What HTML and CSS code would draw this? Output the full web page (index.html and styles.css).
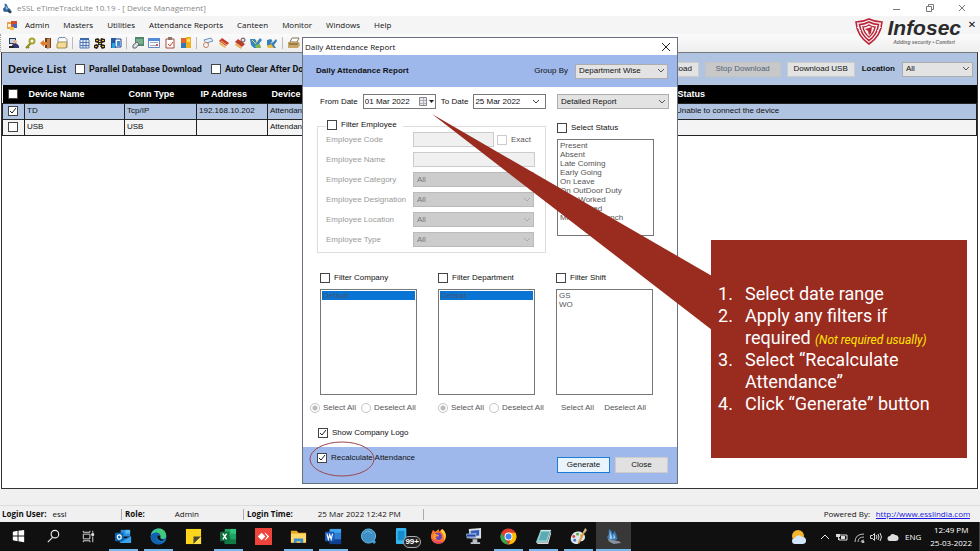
FILE: index.html
```html
<!DOCTYPE html>
<html lang="en">

<head>
  <meta charset="UTF-8">
  <title>eSSL eTimeTrackLite 10.19 - [ Device Management]</title>
  <link rel="stylesheet" href="styles.css">
</head>

<body>

  <!-- Window title -->
  <header class="titlebar">
    <svg class="app-icon" viewBox="0 0 12 12"><path d="M3 1l2 1 2 4 2 1 1 3H2L1 7l2-2z" fill="#2d5f95"/><path d="M4 3l3 4-3 1z" fill="#8db8dc"/><path d="M7 8l4 2-2 2-3-2z" fill="#24435f"/></svg>
    <span class="titlebar-text">eSSL eTimeTrackLite 10.19 - [ Device Management]</span>
    <svg class="window-buttons" viewBox="0 0 74 12" fill="none" stroke="#777"><path d="M1 7.500h7M34.500 4.500h5v5h-5zM36.500 4V2.500h5v5H40M67 3l6 6M73 3l-6 6"/></svg>
  </header>

  <!-- Menu -->
  <nav class="menu">
    <svg class="menu-icon" viewBox="0 0 10 9"><path d="M0 1h6v7H0z" fill="#e9a04d"/><path d="M1 3h4v3H1z" fill="#fff2cf"/><path d="M4 0h6v6H4z" fill="#d24b2c"/><path d="M6 3h4v4H6z" fill="#4268c4"/><path d="M3 6h4v3H3z" fill="#f1c33d"/></svg>
    <a>Admin</a>
    <a>Masters</a>
    <a>Utilities</a>
    <a>Attendance Reports</a>
    <a>Canteen</a>
    <a>Monitor</a>
    <a>Windows</a>
    <a>Help</a>
  </nav>

  <!-- Toolbar -->
  <div class="toolbar">
    <svg viewBox="0 0 12 12"><path d="M1 1h7v6H1z" fill="#333a50"/><path d="M2 2h5v4H2z" fill="#c4d5ef"/><circle cx="7" cy="5" r="2" fill="#e5b88d"/><path d="M4 8q4-4 7 1v2H4z" fill="#33366f"/><path d="M1 9h5v2H1z" fill="#24242c"/></svg>
    <svg viewBox="0 0 12 12"><path d="M7 6L2 11M3 9l2 2" stroke="#8b8a24" stroke-width="2"/><circle cx="8" cy="4" r="2.500" fill="#fff" stroke="#a5a52c" stroke-width="2"/></svg>
    <svg viewBox="0 0 12 12"><path d="M5 1h6v10H5z" fill="#713b1f"/><path d="M7 2l3-1v10l-3 1z" fill="#c48048"/><path d="M0 6l4-3v2h3v3H4v2z" fill="#e17d2c"/></svg>
    <svg viewBox="0 0 12 12"><path d="M3 .500h6l2 2v8H2v-8z" fill="#f8f9fd" stroke="#7c92a8"/><path d="M1 7l2-2h8l-1 6H1z" fill="#f3dc97" stroke="#b08f45"/></svg>
    <span class="separator"></span>
    <svg viewBox="0 0 12 12"><path d="M2 1h9v10H2z" fill="#e3edfb"/><path d="M2 1h9v2H2z" fill="#3868aa"/><path d="M2 3v8h9V3M2 5.500h9M2 8.500h9M5 2v9M8 2v9" stroke="#5278b2" fill="none"/></svg>
    <svg viewBox="0 0 12 12"><path d="M1 2l3-1 2 2-2 3-3-1zM7 1l4 1v3L8 6 6 4zM4 5h4v3H4zM0 8l3-1 2 2-2 3-3-1zM8 7l3 1v3l-3 1-2-3z" fill="#292218"/><path d="M2 3h2v1H2zM8 3h2v1H8zM5 6h2v1H5zM1 9h2v1H1zM8 9h2v1H8z" fill="#e2b02a"/></svg>
    <svg viewBox="0 0 12 12"><path d="M1 1h5v10H1z" fill="#2459aa"/><path d="M5 2h6v8H5z" fill="#fff" stroke="#1b3e8b"/><path d="M7 4h3v5H7z" fill="#3a8bdd"/><path d="M2 6h3v5H2z" fill="#20a5dc"/></svg>
    <span class="separator"></span>
    <svg viewBox="0 0 12 12"><path d="M3 0h9v9H3z" fill="#4f8568"/><path d="M4 2h7v5H4z" fill="#79ad8b"/><path d="M1 8l4-3 2 2-3 4H1z" fill="#d9e2dc" stroke="#667"/></svg>
    <svg viewBox="0 0 12 12"><path d="M.5 1.500h11v9H.5z" fill="#f7faff" stroke="#6b86bb"/><path d="M0 1h12v3H0z" fill="#5689d5"/><path d="M2 5.500h8M2 8.500h6" stroke="#9fabc2"/><path d="M8 7h2v2H8z" fill="#dd5546"/></svg>
    <svg viewBox="0 0 12 12"><path d="M2 2h8v9H2z" fill="#fff" stroke="#a84a3c"/><path d="M4 0h4v3H4z" fill="#86786c"/><path d="M4 7l2 2 3-4" fill="none" stroke="#d6492c"/></svg>
    <svg viewBox="0 0 12 12"><path d="M1 1h5v5H1z" fill="#e0662a"/><path d="M6 0h5v11H6z" fill="#f2b01f"/><path d="M1 6h5v5H1z" fill="#2f7bb5"/><path d="M7 2h3v3H7z" fill="#ffe06b"/></svg>
    <span class="separator"></span>
    <svg viewBox="0 0 12 12"><path d="M2 3l7-2 2 3-7 2z" fill="#e4efff" stroke="#6f8eb7"/><path d="M3 7l4-1M4 6v5" stroke="#82a0c5"/><circle cx="4" cy="8" r="2.500" fill="#f3f8ff" stroke="#ce7f56"/></svg>
    <svg viewBox="0 0 12 12"><path d="M1 4l3-3 7 5-3 3z" fill="#c53b27"/><path d="M3 4l6 4" stroke="#f4b06b"/><path d="M1 7l6 4 1-1-6-5z" fill="#edb554"/></svg>
    <svg viewBox="0 0 12 12"><path d="M1 5l3-3 7 5-3 3z" fill="#b93c2b"/><path d="M1 8l6 4 1-2-6-4z" fill="#e9a954"/><circle cx="9" cy="3" r="2" fill="#efe6e4" stroke="#5d4a4a"/></svg>
    <svg viewBox="0 0 12 12"><path d="M0 2h5l2 3 3-4 2 2-3 4 2 4H4L1 8z" fill="#3186c4"/><path d="M5 8l5-1 1 4H6z" fill="#7fb552"/><path d="M2 3l3 3M8 3l-3 4" stroke="#f1d25a"/></svg>
    <svg viewBox="0 0 12 12"><path d="M1 3l4-1 2 3 3-3 1 2-3 4 2 3H3L1 8z" fill="#397fb4"/><path d="M1 9l4-2 3 4H2z" fill="#e8bd42"/><path d="M8 4L5 6" stroke="#d9ebfb"/></svg>
    <span class="separator"></span>
    <svg viewBox="0 0 12 12"><path d="M4 1h7L9 5H2z" fill="#fff" stroke="#807458"/><path d="M0 5h11l1 3-2 3H0z" fill="#c9a565"/><path d="M1 7h9" stroke="#6d5733"/></svg>
  </div>

  <!-- Company logo over the menu area -->
  <div class="brand">
    <svg class="brand-shield" viewBox="0 0 28 27" fill="none" stroke="#bd2438"><path d="M1 4Q8 4 14 1q6 3 13 3-1 14-13 22Q2 18 1 4z" stroke-width="1.600"/><path d="M4.500 6.500Q9 6.500 14 4q5 2.500 9.500 2.500Q22 17 14 22.500 6 17 4.500 6.500z" stroke-width="1.600"/><path d="M8 9q3 0 6-2 3 2 6 2-1 6-6 10-5-4-6-10z" stroke-width="1.500"/><path d="M10 11l7-2-1 6-2 2-1-4z" fill="#bd2438" stroke="none"/><path d="M2 9l4 4M26 9l-4 4" stroke="#f4f4f4"/></svg>
    <div class="brand-text">
      <span class="brand-name">Infosec</span>
      <span class="brand-slogan">Adding security • Comfort</span>
    </div>
    <button class="brand-close" aria-label="Close child window">✕</button>
  </div>

  <!-- Device list -->
  <main class="device-window">
    <div class="device-bar">
      <h1>Device List</h1>
      <label class="check"><input type="checkbox">Parallel Database Download</label>
      <label class="check"><input type="checkbox">Auto Clear After Download</label>
      <div class="device-actions">
        <button class="download">Download</button>
        <button disabled>Stop Download</button>
        <button>Download USB</button>
        <label for="location">Location</label>
        <select id="location"><option>All</option></select>
      </div>
    </div>
    <table class="devices">
      <colgroup>
        <col class="col-check"><col class="col-name"><col class="col-conn"><col class="col-ip"><col class="col-device"><col>
      </colgroup>
      <thead>
        <tr>
          <th><input type="checkbox" aria-label="Select all devices"></th>
          <th>Device Name</th>
          <th>Conn Type</th>
          <th>IP Address</th>
          <th>Device Type</th>
          <th>Status</th>
        </tr>
      </thead>
      <tbody>
        <tr class="selected">
          <td><input type="checkbox" aria-label="Select TD" checked></td>
          <td>TD</td>
          <td>Tcp/IP</td>
          <td>192.168.10.202</td>
          <td>Attendance</td>
          <td>Unable to connect the device</td>
        </tr>
        <tr>
          <td><input type="checkbox" aria-label="Select USB"></td>
          <td>USB</td>
          <td>USB</td>
          <td></td>
          <td>Attendance</td>
          <td></td>
        </tr>
      </tbody>
    </table>
  </main>

  <footer class="status">
    <div class="status-item"><b>Login User:</b><span>essl</span></div>
    <div class="status-item role"><b>Role:</b><span>Admin</span></div>
    <div class="status-item time"><b>Login Time:</b><span>25 Mar 2022 12:42 PM</span></div>
    <div class="powered">Powered By: <a href="#"><span>http://www.esslindia.com</span></a></div>
  </footer>

  <!-- Report dialog -->
  <form class="dialog">
    <div class="dialog-title">
      <span>Daily Attendance Report</span>
      <button type="button" class="dialog-close" aria-label="Close dialog"><svg viewBox="0 0 8 8" stroke="#222"><path d="M0 0l8 8M8 0L0 8"/></svg></button>
    </div>
    <div class="dialog-band">
      <h2>Daily Attendance Report</h2>
      <label for="groupBy">Group By</label>
      <select id="groupBy"><option>Department Wise</option></select>
    </div>

    <div class="dialog-body">
      <div class="dates">
        <label for="fromDate">From Date</label>
        <div class="date-box from">
          <input type="text" id="fromDate" value="01 Mar 2022">
          <svg viewBox="0 0 16 10"><path d="M.5.500h7v8h-7z" fill="#e8e8ec" stroke="#888"/><path d="M1 3.500h6M1 6.500h6M4.500 1v7" stroke="#b0b0b8"/><path d="M10 3h5l-2.500 3z" fill="#222"/></svg>
        </div>
        <label for="toDate">To Date</label>
        <div class="date-box to">
          <input type="text" id="toDate" value="25 Mar 2022">
          <svg viewBox="0 0 16 10" fill="none" stroke="#444"><path d="M4 3l3 3 3-3"/></svg>
        </div>
        <select class="report-type" aria-label="Report type"><option>Detailed Report</option></select>
      </div>

      <div class="filters">
        <fieldset class="employee">
          <legend><label class="check"><input type="checkbox">Filter Employee</label></legend>
          <div class="field">
            <label for="empCode">Employee Code</label>
            <input type="text" id="empCode" class="code" disabled>
            <label class="check exact"><input type="checkbox" disabled>Exact</label>
          </div>
          <div class="field">
            <label for="empName">Employee Name</label>
            <input type="text" id="empName" disabled>
          </div>
          <div class="field">
            <label for="empCategory">Employee Category</label>
            <select id="empCategory" disabled><option>All</option></select>
          </div>
          <div class="field">
            <label for="empDesignation">Employee Designation</label>
            <select id="empDesignation" disabled><option>All</option></select>
          </div>
          <div class="field">
            <label for="empLocation">Employee Location</label>
            <select id="empLocation" disabled><option>All</option></select>
          </div>
          <div class="field">
            <label for="empType">Employee Type</label>
            <select id="empType" disabled><option>All</option></select>
          </div>
        </fieldset>
        <div class="status-filter">
          <label class="check"><input type="checkbox">Select Status</label>
          <select multiple disabled class="list" aria-label="Status">
            <option>Present</option>
            <option>Absent</option>
            <option>Late Coming</option>
            <option>Early Going</option>
            <option>On Leave</option>
            <option>On OutDoor Duty</option>
            <option>Shift Worked</option>
            <option>Not Worked</option>
            <option>Missed OutPunch</option>
          </select>
        </div>
      </div>

      <div class="lists">
        <div>
          <label class="check"><input type="checkbox">Filter Company</label>
          <select multiple disabled class="list" aria-label="Company"><option selected>Default</option></select>
        </div>
        <div>
          <label class="check"><input type="checkbox">Filter Department</label>
          <select multiple disabled class="list" aria-label="Department"><option selected>Default</option></select>
        </div>
        <div>
          <label class="check"><input type="checkbox">Filter Shift</label>
          <select multiple disabled class="list" aria-label="Shift"><option>GS</option><option>WO</option></select>
        </div>
      </div>

      <div class="select-row">
        <div class="radios">
          <label><input type="radio" name="company" disabled checked>Select All</label>
          <label><input type="radio" name="company" disabled>Deselect All</label>
        </div>
        <div class="radios">
          <label><input type="radio" name="department" disabled checked>Select All</label>
          <label><input type="radio" name="department" disabled>Deselect All</label>
        </div>
        <div class="shift-buttons">
          <button type="button">Select All</button>
          <button type="button">Deselect All</button>
        </div>
      </div>

      <label class="check show-logo"><input type="checkbox" checked>Show Company Logo</label>
    </div>

    <div class="dialog-footer">
      <label class="check"><input type="checkbox" checked>Recalculate Attendance</label>
      <button type="button" class="primary">Generate</button>
      <button type="button">Close</button>
      <svg class="ring" viewBox="0 0 66 36" fill="none" stroke="#9c4650"><ellipse cx="33" cy="18" rx="32" ry="17"/></svg>
    </div>
  </form>

  <!-- Instruction callout -->
  <svg class="callout-tail" viewBox="0 0 280 218"><path d="M0 0l280 162v54z" fill="#992b1f"/></svg>
  <aside class="callout">
    <ol>
      <li>Select date range</li>
      <li>Apply any filters if required <em>(Not required usually)</em></li>
      <li>Select “Recalculate Attendance”</li>
      <li>Click “Generate” button</li>
    </ol>
  </aside>

  <!-- Taskbar -->
  <div class="taskbar">
    <button class="task" aria-label="Start"><svg viewBox="0 0 18 18" fill="#fff"><path d="M3 4l5-1v5H3zM9 3l6-1v6H9zM3 9h5v5l-5-1zM9 9h6v6l-6-1z"/></svg></button>
    <button class="task" aria-label="Search"><svg viewBox="0 0 18 18" fill="none" stroke="#eee" stroke-width="1.200"><circle cx="10.500" cy="6.500" r="4"/><path d="M8 10l-5 5"/></svg></button>
    <button class="task" aria-label="Task view"><svg viewBox="0 0 18 18" fill="none" stroke="#ddd"><path d="M3.500 6.500h7v5h-7zM3.500 3v1.500h7V3M3.500 15v-1.500h7V15M13.500 3v2M13.500 9v6"/><path d="M12.500 6h2v2h-2z" fill="#fff"/></svg></button>
    <button class="task open" aria-label="Outlook"><svg viewBox="0 0 18 18"><path d="M6 2h10v7H6z" fill="#2b8fdb"/><path d="M11 2h5v4h-5z" fill="#52baf2"/><path d="M5 8l6 3 6-3v8H5z" fill="#1c71bd"/><path d="M5 16l12-7v7z" fill="#3aa7ec"/><rect y="5" width="9" height="9" rx="1" fill="#0867b5"/><ellipse cx="4.500" cy="9.500" rx="2" ry="2.300" fill="none" stroke="#fff" stroke-width="1.300"/></svg></button>
    <button class="task open" aria-label="Edge"><svg viewBox="0 0 18 18"><circle cx="9" cy="9" r="8.500" fill="#1579ca"/><path d="M1 7C3-1 15-2 17 7c1 6-6 5-6 3 1-3-1-5-4-5-3 0-5 1-6 2z" fill="#43ca79"/><path d="M1 8c3-5 10-4 10 1-3-2-5 0-4 3 1 3 5 4 8 2-5 6-14 3-14-6z" fill="#1560aa"/><path d="M1 7c2-4 6-7 10-5-4-1-6 1-8 3z" fill="#38bddb"/><path d="M8 11c-1-3 1-4 3-2-1 2 1 4 5 3-2 2-6 2-8-1z" fill="#111"/></svg></button>
    <button class="task" aria-label="Sticky Notes"><svg viewBox="0 0 18 18"><path d="M1 1h16v16H1z" fill="#fdd51a"/><path d="M9 9h8l-8 8z" fill="#454638"/><path d="M17 9v8H9z" fill="#ffe04a"/></svg></button>
    <button class="task open" aria-label="Excel"><svg viewBox="0 0 18 18"><path d="M5 1h12v16H5z" fill="#21a366"/><path d="M11 1h6v5h-6z" fill="#33c481"/><path d="M5 9h6v8H5zM11 12h6v5h-6z" fill="#137b47"/><rect y="4" width="10" height="10" rx="1" fill="#0e6d3c"/><path d="M3 6l4 6M7 6l-4 6" stroke="#fff" stroke-width="1.500"/></svg></button>
    <button class="task" aria-label="AnyDesk"><svg viewBox="0 0 18 18"><path d="M0 0h18v18H0z" fill="#ef443b"/><path d="M7 5l4 4-4 4-4-4z" fill="#fff"/><path d="M10 5h1l4 4-4 4h-1l3-4z" fill="#fff"/></svg></button>
    <button class="task open" aria-label="File Explorer"><svg viewBox="0 0 18 18"><path d="M1 3h6l2 2h8v11H1z" fill="#e8a82b"/><path d="M1 6h16v9H1z" fill="#ffd967"/><path d="M4 16v-5h10v5h-3v-2H7v2z" fill="#398ecb"/></svg></button>
    <button class="task open" aria-label="Word"><svg viewBox="0 0 18 18"><path d="M5 1h12v16H5z" fill="#2b7cd3"/><path d="M5 1h12v4H5z" fill="#41a5ee"/><path d="M5 12h12v5H5z" fill="#103f91"/><rect y="4" width="10" height="10" rx="1" fill="#185abd"/><path d="M2 6l1.500 6L5 7l1.500 5L8 6" stroke="#fff" fill="none" stroke-width="1.200"/></svg></button>
    <button class="task" aria-label="Search app"><svg viewBox="0 0 18 18"><path d="M13 13l3 3" stroke="#35a3dc" stroke-width="3"/><circle cx="9" cy="8.500" r="7.500" fill="#3f8fc4" stroke="#63bfe9"/><path d="M4 6q4-5 9 0" stroke="#72b9e4" fill="none"/></svg></button>
    <button class="task" aria-label="Your Phone"><svg viewBox="0 0 18 18"><rect x="1" width="11" height="17" rx="1" fill="#35b5ed"/><path d="M3 3h7v10H3z" fill="#178bcd"/></svg><span class="badge">99+</span></button>
    <button class="task" aria-label="Firefox"><svg viewBox="0 0 18 18"><path d="M2 5l1-3 3 2 3-3 1 3 3-3c5 4 5 11 1 14-5 4-13 1-13-6q0-3 1-4z" fill="#ff762b"/><path d="M11 3l2-2c5 4 4 9 2 12 0-5-1-7-4-10z" fill="#ffd13b"/><path d="M2 11c2 5 8 7 12 3-4 1-9 1-12-3z" fill="#e6308d"/><circle cx="8.500" cy="9" r="4" fill="#6542bf"/><path d="M4 6l4 1q2 0 1 2H6q0 3 3 3-5 1-6-3z" fill="#ff9a2e"/></svg></button>
    <button class="task" aria-label="Remote desktop"><svg viewBox="0 0 18 18"><path d="M4 1l13-1v11H5z" fill="#dce0e5"/><path d="M6 3l9-1v6l-9 1z" fill="#345dbb"/><path d="M1 6l11-1v5L2 11z" fill="#8ca6d9"/><path d="M2 7h9v2H2z" fill="#2549a2"/><path d="M8 12h5v3h3v2H6v-2h2z" fill="#bcc2c7"/></svg></button>
    <button class="task open" aria-label="Chrome"><svg viewBox="0 0 18 18"><circle cx="9" cy="9" r="8.500" fill="#e33b2e"/><path d="M1.600 5L9 17.500C1 17-1 10 1.600 5z" fill="#2da94f"/><path d="M9 17.500L13 9 9 5h7.500c3 7-2 12.500-7.500 12.500z" fill="#fdbd00"/><circle cx="9" cy="9" r="4.200" fill="#fff"/><circle cx="9" cy="9" r="3.200" fill="#4285f4"/></svg></button>
    <button class="task open" aria-label="Notepad"><svg viewBox="0 0 18 18"><path d="M6 2h11l-4 13H1z" fill="#8fd0d4"/><path d="M6 2h11v1H6z" fill="#e0e9e9"/><path d="M1 15h12l4-12v3l-3 11H3z" fill="#d8dcdc"/><path d="M7 4h8l-3 9H4z" fill="#5daab0"/></svg></button>
    <button class="task open" aria-label="Paint"><svg viewBox="0 0 18 18"><path d="M1 10C2 4 9 2 13 5c5 3 3 9-1 9-3 0-2 3-5 3-4 0-7-3-6-7z" fill="#dce7ed"/><circle cx="4" cy="9" r="1.500" fill="#dc4138"/><circle cx="8" cy="6.500" r="1.500" fill="#58a939"/><circle cx="5" cy="13" r="1.500" fill="#3c76ce"/><circle cx="12" cy="8" r="1.500" fill="#f0bb33"/><path d="M9 16l6-12" stroke="#d99946" stroke-width="2"/><path d="M14 4l2-4 2 2-2 3z" fill="#d5b58b"/></svg></button>
    <button class="task open active" aria-label="eTimeTrackLite"><svg viewBox="0 0 18 18"><path d="M4 1l3 2 1 4 2-4 2 4 1 5-5 3-6-5 2-3z" fill="#397bb9"/><path d="M5 3l3 8-3 1zM9 6l2 4-2 2z" fill="#a9d0ec"/><path d="M3 11l5 2 7 1 2 2-8 1-5-3z" fill="#8a929b"/></svg></button>

    <div class="tray">
      <svg class="weather" viewBox="0 0 16 16"><circle cx="7" cy="7" r="6" fill="#f7b32b"/><path d="M4 15a3 3 0 0 1 0-6 4 4 0 0 1 7-1 3.500 3.500 0 0 1 1 7z" fill="#d4e7fa"/></svg>
      <svg class="tray-icon" viewBox="0 0 12 12" fill="none" stroke="#eee"><path d="M2 8l4-4 4 4"/></svg>
      <svg class="tray-icon" viewBox="0 0 12 12"><path d="M4 4h7v5H3V7" fill="none" stroke="#ddd"/><path d="M5 5h4v3H5zM0 3h4v3H0zM2 6h1v3H2z" fill="#ddd"/></svg>
      <svg class="tray-icon" viewBox="0 0 12 12" fill="none" stroke="#bbb"><path d="M2 11q0-8 9-8M5 11q0-5 6-5M8 11q0-2 3-2"/><circle cx="10" cy="11" r="1" fill="#eee"/></svg>
      <svg class="tray-icon" viewBox="0 0 12 12" fill="none" stroke="#ddd"><path d="M.500 4.500h2l2-2v7l-2-2h-2zM6 4q2 2 0 4M8 3q2 3 0 6M10 2q3 4 0 8"/></svg>
      <svg class="tray-icon" viewBox="0 0 12 12"><path d="M3 10a2.500 2.500 0 0 1 0-5 3 3 0 0 1 5-1 3 3 0 0 1 1 6z" fill="#ddd"/></svg>
      <span class="lang">ENG</span>
      <div class="clock"><span>12:49 PM</span><span>25-03-2022</span></div>
    </div>
  </div>

</body>

</html>
```
FILE: styles.css
```css
/* Page */

* {
  box-sizing: border-box;
}

body {
  display: flex;
  flex-direction: column;
  min-height: 100vh;
  margin: 0;
  position: relative;
  font-family: "Liberation Sans", Arial, sans-serif;
  font-size: 8px;
  line-height: 10px;
  color: #111;
  background: #fff;
}

button,
input,
select {
  font: inherit;
  color: inherit;
  margin: 0;
}

svg {
  display: block;
  flex: none;
}

/* Form controls */
input[type="checkbox"],
input[type="radio"] {
  appearance: none;
  flex: none;
  width: 10px;
  height: 10px;
  border: 1px solid #444;
  background: #fff;
}

input[type="checkbox"]:checked {
  background: #fff url("data:image/svg+xml,%3Csvg xmlns='http://www.w3.org/2000/svg' viewBox='0 0 8 8'%3E%3Cpath d='M1 4l2 2 4-5' fill='none' stroke='%23222'/%3E%3C/svg%3E");
}

input[type="checkbox"]:disabled {
  border-color: #ccc;
}

input[type="radio"] {
  border-color: #c4c4c4;
  border-radius: 50%;
}

input[type="radio"]:checked {
  background: radial-gradient(circle, #bbb 2px, #fff 3px);
}

.check {
  display: flex;
  align-items: center;
  gap: 4px;
}

select {
  appearance: none;
  height: 15px;
  padding: 0 14px 0 3px;
  border: 1px solid #adadad;
  border-radius: 0;
  background: #e3e3e3 url("data:image/svg+xml,%3Csvg xmlns='http://www.w3.org/2000/svg' viewBox='0 0 8 8'%3E%3Cpath d='M1 2l3 3 3-3' fill='none' stroke='%23555'/%3E%3C/svg%3E") no-repeat right 2px center / 8px 8px;
}

/* Title bar */
.titlebar {
  display: flex;
  align-items: center;
  height: 16px;
  padding: 0 14px 0 2px;
  font-family: "Open Sans", sans-serif;
  color: #888;
}

.app-icon {
  width: 11px;
  height: 12px;
  margin-right: 4px;
}

.window-buttons {
  width: 74px;
  height: 12px;
  margin-left: auto;
}

/* Menu */
.menu {
  display: flex;
  align-items: center;
  gap: 14px;
  height: 18px;
  padding-left: 7px;
  font-family: "Open Sans", sans-serif;
  background: #f5f5f5;
}

.menu-icon {
  width: 10px;
  height: 9px;
  margin-right: -6px;
}

/* Toolbar */
.toolbar {
  display: flex;
  align-items: center;
  gap: 4px;
  height: 18px;
  padding-left: 7px;
  border-left: 1px dotted #999;
  background: linear-gradient(#fbfbfb, #eee);
}

.toolbar svg {
  width: 12px;
  height: 12px;
}

.separator {
  width: 2px;
  height: 12px;
  border-left: 1px solid #bbb;
}

/* Brand */
.brand {
  position: absolute;
  top: 18px;
  right: 3px;
  display: flex;
}

.brand-shield {
  width: 28px;
  height: 27px;
  margin-right: 4px;
}

.brand-text {
  display: flex;
  flex-direction: column;
}

.brand-name {
  font-size: 21px;
  line-height: 20px;
  font-weight: bold;
  font-style: italic;
  color: #2b2b2b;
}

.brand-slogan {
  padding-right: 6px;
  font-size: 5px;
  line-height: 8px;
  font-weight: bold;
  font-style: italic;
  text-align: right;
  color: #777;
}

.brand-close {
  width: 10px;
  height: 14px;
  margin-left: 6px;
  padding: 0;
  border: 0;
  background: none;
  font-family: "DejaVu Sans", sans-serif;
  font-size: 10px;
  font-weight: bold;
}

/* Device window */
.device-window {
  flex: 1;
  margin: 0 2px 0 1px;
  border: 1px solid #333;
  border-top-color: #777;
  background: #fff;
}

.device-bar {
  display: flex;
  align-items: center;
  gap: 9px;
  height: 32px;
  padding: 0 4px 0 6px;
  background: #b0c4e1;
  font-weight: bold;
  white-space: nowrap;
}

.device-bar h1 {
  margin: 0;
  font-size: 11px;
}

.device-bar .check {
  font-family: Roboto, sans-serif;
  font-size: 9px;
}

.device-actions {
  display: flex;
  align-items: center;
  gap: 6px;
  margin-left: auto;
}

.device-actions button {
  height: 15px;
  width: 68px;
  padding: 0;
  border: 1px solid #ccc;
  background: #e3e3e3;
  font-weight: normal;
}

.device-actions .download {
  width: 49px;
}

.device-actions button:disabled {
  width: 76px;
  border-color: #c4c4c4;
  background: #c8c8c8;
  color: #53627a;
}

.device-actions label {
  padding: 0 1px;
}

.device-actions select {
  width: 71px;
  font-weight: normal;
}

.devices {
  width: 100%;
  table-layout: fixed;
  border-collapse: collapse;
}

.col-check {
  width: 22px;
}

.col-name {
  width: 100px;
}

.col-conn {
  width: 72px;
}

.col-ip {
  width: 71px;
}

.col-device {
  width: 406px;
}

.devices th,
.devices td {
  height: 16px;
  padding: 0 2px;
  text-align: left;
  white-space: nowrap;
}

.devices th {
  height: 18px;
  padding: 0 4px;
  font-size: 9px;
  color: #fff;
  background: #000;
}

.devices td {
  border: 1px solid #222;
  background: #f4f4f4;
}

.devices .selected td {
  background: #b0c4e1;
}

.devices th:first-child,
.devices td:first-child {
  padding: 0 5px;
}

.devices input {
  display: block;
}

/* Status bar */
.status {
  display: flex;
  align-items: center;
  height: 33px;
  padding: 17px 10px 0 2px;
  background: linear-gradient(#f0f0f0 16px, #ddd 16px, #ddd 17px, #f0f0f0 17px);
  font-family: "Open Sans", sans-serif;
}

.status-item {
  display: flex;
  gap: 6px;
  width: 120px;
  height: 11px;
  border-right: 1px solid #aaa;
}

.status-item.role {
  width: 122px;
  padding-left: 3px;
  gap: 30px;
}

.status-item.time {
  width: 180px;
  padding-left: 3px;
  gap: 25px;
}

.powered {
  display: flex;
  gap: 6px;
  margin-left: auto;
}

.powered a {
  display: flex;
  justify-content: center;
  width: 94px;
  overflow: hidden;
  color: #1717e0;
}

/* Report dialog */
.dialog {
  position: absolute;
  top: 37px;
  left: 50%;
  width: 376px;
  margin-left: -188px;
  border: 1px solid #69717e;
  background: #fff;
}

.dialog-title {
  display: flex;
  align-items: center;
  justify-content: space-between;
  height: 17px;
  padding: 0 7px 0 2px;
  font-family: "Open Sans", sans-serif;
}

.dialog-close {
  padding: 0;
  border: 0;
  background: none;
}

.dialog-close svg {
  width: 8px;
  height: 8px;
}

.dialog-band {
  display: flex;
  align-items: center;
  height: 32px;
  padding: 0 9px 0 13px;
  background: #9fb8eb;
}

.dialog-band h2 {
  flex: 1;
  margin: 0;
  font-size: 8px;
}

.dialog-band select {
  width: 93px;
  margin-left: 7px;
}

.dialog-body {
  padding: 7px 8px 9px 17px;
}

.dates {
  display: flex;
  align-items: center;
  gap: 5px;
  height: 15px;
}

.date-box {
  display: flex;
  align-items: center;
  width: 73px;
  height: 15px;
  border: 1px solid #777;
}

.date-box input {
  flex: 1;
  min-width: 0;
  padding: 0 0 0 1px;
  border: 0;
  background: none;
}

.date-box svg {
  width: 16px;
  height: 10px;
}

.dates .report-type {
  width: 112px;
  margin-left: auto;
}

.filters {
  display: flex;
  gap: 11px;
  margin-top: 11px;
}

.employee {
  width: 229px;
  min-width: 0;
  height: 133px;
  margin: 0 0 0 -3px;
  padding: 0 10px 0 8px;
  border: 1px solid #ddd;
  display: flex;
  flex-direction: column;
  gap: 5px;
}

.employee legend {
  height: 12px;
  padding: 0 6px 0 1px;
}

.field {
  display: flex;
  align-items: center;
  height: 15px;
  color: #999;
}

.field label:first-child {
  width: 87px;
  white-space: nowrap;
}

.field input[type="text"] {
  width: 122px;
  height: 15px;
  border: 1px solid #ccc;
  background: #f0f0f0;
}

.field input.code {
  width: 81px;
}

.field .exact {
  margin-left: 3px;
  color: #555;
}

.field select {
  width: 121px;
  border-color: #bbb;
  background-color: #ccc;
  background-image: url("data:image/svg+xml,%3Csvg xmlns='http://www.w3.org/2000/svg' viewBox='0 0 8 8'%3E%3Cpath d='M1 2l3 3 3-3' fill='none' stroke='%23aaa'/%3E%3C/svg%3E");
  color: #777;
  opacity: 1;
}

.status-filter {
  padding-top: 3px;
}

.list {
  display: block;
  width: 97px;
  height: 106px;
  margin-top: 6px;
  padding: 1px;
  border: 1px solid #777;
  background: #fff;
  color: #555;
  overflow: hidden;
  opacity: 1;
}

.status-filter .list {
  height: 97px;
}

.list option {
  min-height: 9px;
  padding: 0 1px;
  font-size: 8px;
  line-height: 9px;
  color: #555;
}

.list option:checked {
  background: #0a74d5 linear-gradient(#0a74d5, #0a74d5);
  color: #41566b;
}

.lists {
  display: grid;
  grid-template-columns: 97px 97px 97px;
  gap: 21px;
  margin-top: 20px;
}

.select-row {
  display: grid;
  grid-template-columns: 128px 119px 1fr;
  align-items: center;
  height: 12px;
  margin: 7px 0 0 -10px;
  color: #555;
  white-space: nowrap;
}

.radios {
  display: flex;
  gap: 5px;
}

.radios label {
  display: flex;
  align-items: center;
  gap: 3px;
}

.shift-buttons button {
  padding: 0 4px;
  border: 0;
  background: none;
}

.show-logo {
  margin: 14px 0 0 -2px;
}

.dialog-footer {
  position: relative;
  display: flex;
  align-items: center;
  gap: 5px;
  height: 36px;
  padding: 0 9px 0 14px;
  background: #9fb8eb;
}

.dialog-footer .check {
  align-self: flex-start;
  margin: 6px auto 0 0;
}

.dialog-footer button {
  width: 53px;
  height: 16px;
  padding: 0;
  border: 1px solid #ccc;
  background: #e1e1e1;
}

.dialog-footer .primary {
  border-color: #1a7fd4;
  background: #e9f4fd;
}

.ring {
  position: absolute;
  left: 6px;
  top: -6px;
  width: 66px;
  height: 36px;
}

/* Callout */
.callout-tail {
  position: absolute;
  top: 114px;
  right: 268px;
  width: 280px;
  height: 218px;
}

.callout {
  position: absolute;
  top: 240px;
  right: 13px;
  display: flex;
  align-items: center;
  width: 256px;
  height: 218px;
  background: #992b1f;
  color: #fff;
  font-family: Roboto, sans-serif;
  font-size: 18px;
  line-height: 22px;
}

.callout ol {
  margin: 0;
  padding: 0 22px 0 34px;
  list-style: none;
  counter-reset: step;
}

.callout li {
  counter-increment: step;
}

.callout li::before {
  content: counter(step) ".";
  float: left;
  width: 27px;
  margin-left: -27px;
}

.callout em {
  font-size: 12px;
  line-height: 12px;
  color: #ffe600;
}

/* Taskbar */
.taskbar {
  display: flex;
  height: 29px;
  padding-left: 1px;
  border-right: 1px solid #444;
  background: #101010;
  color: #fff;
}

.task {
  position: relative;
  display: flex;
  align-items: center;
  justify-content: center;
  width: 35px;
  padding: 0;
  border: 0;
  background: none;
}

.task svg {
  width: 17px;
  height: 17px;
}

.task.open::after {
  content: "";
  position: absolute;
  left: 3px;
  right: 3px;
  bottom: 0;
  height: 2px;
  background: #76b9ed;
}

.task.active {
  background: #383838;
}

.task.active::after {
  left: 0;
  right: 0;
}

.badge {
  position: absolute;
  right: 0;
  bottom: 3px;
  padding: 0 1px;
  border: 1px solid #aaa;
  border-radius: 6px;
  background: #222;
  font-weight: bold;
}

.tray {
  display: flex;
  align-items: center;
  gap: 5px;
  margin-left: auto;
  padding-right: 7px;
  font-family: "Open Sans", sans-serif;
}

.weather {
  width: 16px;
  height: 16px;
  margin-right: 7px;
}

.tray-icon {
  width: 12px;
  height: 12px;
}

.lang {
  margin-left: 1px;
}

.clock {
  display: flex;
  flex-direction: column;
  align-items: center;
  gap: 3px;
  margin-left: 4px;
}
```
